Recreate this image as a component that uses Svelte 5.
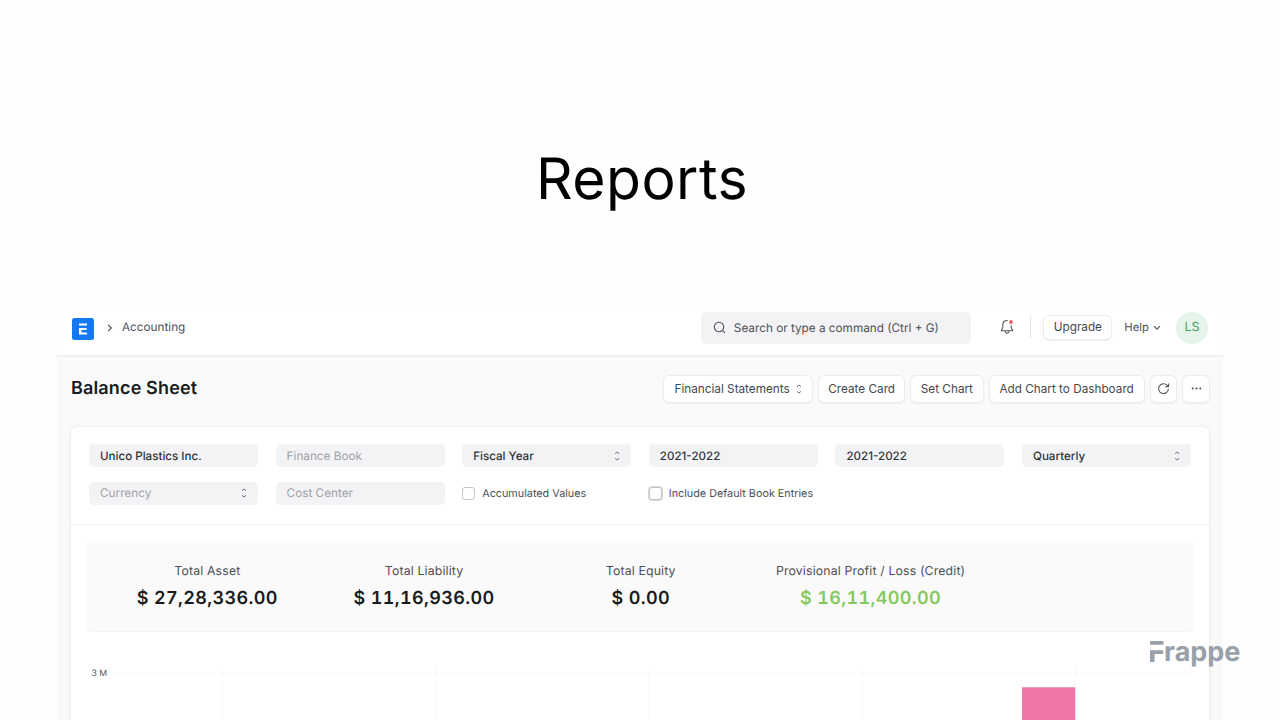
<script lang="ts">
  type Field = {
    label: string;
    filled?: boolean;
    select?: boolean;
  };

  const actions = ["Create Card", "Set Chart", "Add Chart to Dashboard"];

  const filters: Field[] = [
    { label: "Unico Plastics Inc.", filled: true },
    { label: "Finance Book" },
    { label: "Fiscal Year", filled: true, select: true },
    { label: "2021-2022", filled: true },
    { label: "2021-2022", filled: true },
    { label: "Quarterly", filled: true, select: true },
    { label: "Currency", select: true },
    { label: "Cost Center" },
  ];

  const summary = [
    { label: "Total Asset", value: "$ 27,28,336.00" },
    { label: "Total Liability", value: "$ 11,16,936.00" },
    { label: "Total Equity", value: "$ 0.00" },
    { label: "Provisional Profit / Loss (Credit)", value: "$ 16,11,400.00", profit: true },
  ];

  const gridLines = [222.5, 435.5, 649, 862, 1075.5];
</script>

{#snippet sortIcon()}
  <svg class="sort" width="6" height="10" viewBox="0 0 6 10">
    <path d="M1 2.7 3 1l2 1.7M1 7.3 3 9l2-1.7" />
  </svg>
{/snippet}

<main>
  <h1>Reports</h1>

  <div class="window">
    <header>
      <svg class="logo" width="22" height="22" viewBox="0 0 22 22">
        <rect width="22" height="22" rx="2.5" fill="#1579f2" />
        <path d="M7 5.4h8v2.1H7zM7 10h7.6v2H9.4v2.4H15v2.1H7z" fill="#fff" />
      </svg>
      <svg class="crumb" width="6" height="8" viewBox="0 0 6 8">
        <path d="m1.2 1 3.2 3-3.2 3" />
      </svg>
      <span class="section">Accounting</span>

      <div class="search">
        <svg width="13" height="13" viewBox="0 0 13 13">
          <circle cx="6" cy="6" r="4.7" />
          <path d="m9.5 9.5 2.4 2.3" />
        </svg>
        <span>Search or type a command (Ctrl + G)</span>
      </div>

      <svg class="bell" width="14" height="16" viewBox="0 0 14 16">
        <path
          d="M7.7 1.5C4.7 1.1 2.8 3.2 2.8 5.8v2.6c0 1.1-1.3 2-1.5 3.4h11.4c-.2-1.4-1.5-2.3-1.5-3.4V6.3"
        />
        <path d="M5.1 12.2c.2 2.6 3.6 2.6 3.8 0" />
        <circle cx="11" cy="3" r="1.9" />
      </svg>
      <i class="separator"></i>
      <button class="upgrade">Upgrade</button>
      <span class="help">Help</span>
      <svg class="caret" width="8" height="6" viewBox="0 0 8 6">
        <path d="m1 1.2 3 3 3-3" />
      </svg>
      <span class="avatar">LS</span>
    </header>

    <div class="title-row">
      <h2>Balance Sheet</h2>
      <div class="actions">
        <button class="picker">Financial Statements {@render sortIcon()}</button>
        {#each actions as action, i}
          <button class="action-{i}">{action}</button>
        {/each}
        <button class="square" aria-label="Refresh">
          <svg class="refresh" width="13" height="13" viewBox="0 0 13 13">
            <path d="M11.4 7A4.9 4.9 0 1 1 10 3.2l1.2 1.2" />
            <path d="M11.6 1.5v3.1H8.5" />
          </svg>
        </button>
        <button class="square" aria-label="Menu">
          <svg width="11" height="3" viewBox="0 0 11 3">
            <circle cx="1.7" cy="1.5" r="0.95" />
            <circle cx="5.5" cy="1.5" r="0.95" />
            <circle cx="9.3" cy="1.5" r="0.95" />
          </svg>
        </button>
      </div>
    </div>

    <div class="report">
      <div class="filters">
        {#each filters as field}
          <div class="field" class:filled={field.filled}>
            <span>{field.label}</span>
            {#if field.select}
              {@render sortIcon()}
            {/if}
          </div>
        {/each}
        <label><i class="box"></i>Accumulated Values</label>
        <label><i class="box focused"></i>Include Default Book Entries</label>
      </div>

      <div class="summary">
        {#each summary as item}
          <div class="item">
            <span class="label">{item.label}</span>
            <span class="value" class:profit={item.profit}>{item.value}</span>
          </div>
        {/each}
      </div>

      <svg class="chart" width="1138" height="88" viewBox="71 632 1138 88">
        <path class="grid" d="M112 673.5H1190" />
        {#each gridLines as x}
          <path class="grid" d="M{x} 668V720" />
        {/each}
        <text x="91.5" y="676">3 M</text>
        <rect x="1022" y="687.3" width="53.2" height="34" fill="#ee75a5" />
      </svg>
    </div>
  </div>

  <div class="watermark">
    <svg width="14" height="21" viewBox="0 0 14 21">
      <path d="M0 0h13.5v3.8H0zM0 9.3h13.2v3.6H4.5v8H0z" />
    </svg>
    <span>rappe</span>
  </div>
</main>

<style>
  :global(body) {
    margin: 0;
  }

  main {
    position: relative;
    width: 1280px;
    height: 720px;
    overflow: hidden;
    background: #fdffff;
    font-family: Inter, sans-serif;
    font-size: 11.75px;
    color: #4b5157;
    text-rendering: geometricPrecision;
  }

  h1 {
    box-sizing: border-box;
    height: 305px;
    margin: 0;
    padding: 144px 0 0 4px;
    font-size: 57px;
    line-height: 70px;
    font-weight: 400;
    letter-spacing: 0.5px;
    text-align: center;
    color: #000;
  }

  .window {
    width: 1166px;
    height: 415px;
    margin-left: 57px;
    background: #fafafa;
  }

  svg {
    display: block;
    flex: none;
    fill: none;
    stroke: #50565b;
    stroke-width: 1.1;
  }
  .sort {
    stroke: #6b7177;
    stroke-width: 1;
  }

  header {
    box-sizing: border-box;
    display: flex;
    align-items: center;
    height: 51px;
    padding: 0 15px 6px;
    background: #fff;
    border-bottom: 1px solid #ececec;
    box-shadow: 0 1px 1px #f2f2f2;
  }
  .logo {
    margin-top: 3px;
    stroke: none;
  }
  .crumb {
    margin: 2px 0 0 13px;
  }
  .section {
    margin-left: 9px;
  }
  .search {
    box-sizing: border-box;
    display: flex;
    align-items: center;
    gap: 8px;
    width: 270.5px;
    height: 32px;
    margin: 1px 0 0 auto;
    padding-left: 12px;
    border-radius: 5px;
    background: #f3f3f5;
  }
  .bell {
    margin-left: 29px;
  }
  .bell circle {
    fill: #ee5a5a;
    stroke: none;
  }
  .separator {
    width: 1px;
    height: 22px;
    margin: 0 13px 0 16px;
    background: #e2e2e4;
  }

  button {
    box-sizing: border-box;
    display: flex;
    align-items: center;
    justify-content: center;
    height: 26px;
    margin: 0;
    padding: 0 0 1px;
    border: none;
    border-radius: 5px;
    background: #fff;
    box-shadow:
      0 0 0 1px #ededee,
      0 1px 2px #d0d0d2;
    color: #43484d;
    font-family: inherit;
    font-size: 11.75px;
    white-space: nowrap;
  }
  .upgrade {
    width: 67px;
    height: 23px;
  }
  .help {
    margin-left: 13px;
    font-size: 11.3px;
  }
  .caret {
    margin: 2px 0 0 4px;
  }
  .avatar {
    width: 32px;
    height: 32px;
    margin: 1px 0 0 15px;
    border-radius: 50%;
    background: #e5f3ea;
    color: #48a26a;
    font-size: 12.5px;
    line-height: 32px;
    text-align: center;
  }

  .title-row {
    display: flex;
    justify-content: space-between;
    padding: 20px 14px 0;
  }
  h2 {
    margin: 1px 0 0;
    font-size: 18px;
    line-height: 24px;
    font-weight: 600;
    letter-spacing: 0.15px;
    color: #171b20;
  }
  .actions {
    display: flex;
    gap: 7px;
  }
  .picker {
    gap: 6px;
    width: 148px;
  }
  .action-0 {
    width: 85px;
  }
  .action-1 {
    width: 71.5px;
  }
  .action-2 {
    width: 154px;
  }
  .square {
    width: 25.7px;
  }
  .square circle {
    fill: #43484d;
    stroke: none;
  }

  .report {
    height: 293px;
    margin: 25px 14px 0;
    border-radius: 6px 6px 0 0;
    background: #fff;
    box-shadow: 0 0 3px #dfdfe1;
  }
  .filters {
    box-sizing: border-box;
    display: grid;
    grid-template-columns: repeat(6, minmax(0, 1fr));
    grid-auto-rows: 23px;
    gap: 14.5px 17.6px;
    height: 97.5px;
    padding: 17px 18px 0;
    border-bottom: 1px solid #f4f4f5;
  }
  .field {
    display: flex;
    align-items: center;
    justify-content: space-between;
    padding: 0 11px;
    border-radius: 5px;
    background: #f3f3f5;
    color: #9ca2a8;
    white-space: nowrap;
  }
  .filled {
    color: #2e3338;
    font-size: 11.6px;
    font-weight: 500;
  }
  label {
    display: flex;
    align-items: center;
    font-size: 10.8px;
    white-space: nowrap;
  }
  .box {
    box-sizing: border-box;
    flex: none;
    width: 13px;
    height: 13px;
    margin-right: 7px;
    border: 1px solid #c3c5c9;
    border-radius: 3px;
    background: #fff;
  }
  .focused {
    box-shadow: 0 0 0 1px #d9dadd;
  }

  .summary {
    box-sizing: border-box;
    display: grid;
    grid-template-columns: repeat(3, 216.7px) 243px;
    height: 91px;
    margin: 16.5px 15px 0;
    padding-left: 13px;
    border-bottom: 1px solid #f3f3f4;
    border-radius: 5px;
    background: #fafafa;
    overflow: hidden;
  }
  .item {
    display: flex;
    flex-direction: column;
    align-items: center;
    padding-top: 22px;
  }
  .label {
    font-size: 12.3px;
    line-height: 16px;
    letter-spacing: 0.15px;
    white-space: nowrap;
  }
  .value {
    margin-top: 8px;
    font-size: 18px;
    line-height: 24px;
    font-weight: 600;
    font-variant-numeric: tabular-nums;
    letter-spacing: 0.37px;
    color: #171b20;
    white-space: nowrap;
  }
  .profit {
    color: #84c85f;
  }

  .chart {
    overflow: hidden;
  }
  .grid {
    stroke: #f7f7f8;
    stroke-width: 1;
  }
  .chart rect {
    stroke: none;
  }
  .chart text {
    fill: #50565b;
    stroke: none;
    font-size: 8.7px;
  }

  /* brand mark floats above the window corner */
  .watermark {
    position: absolute;
    top: 633px;
    left: 1150px;
    display: flex;
    color: #98a1a9;
    font-size: 27px;
    line-height: 38px;
    font-weight: 650;
    letter-spacing: 0;
  }
  .watermark svg {
    margin-top: 7.5px;
    fill: #98a1a9;
    stroke: none;
  }
</style>
